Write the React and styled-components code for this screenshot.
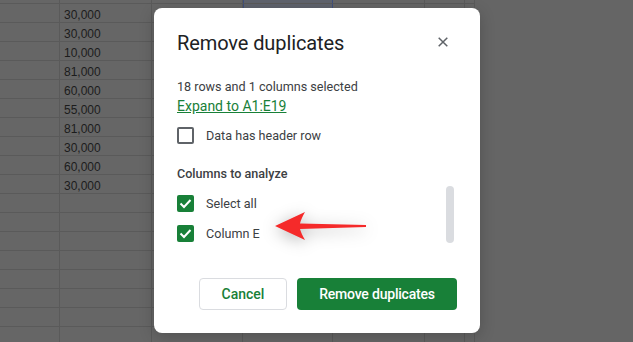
import React from 'react';
import styled, { createGlobalStyle } from 'styled-components';

const GlobalStyle = createGlobalStyle`
    body {
        margin: 0;
        background: #666666;
        overflow: hidden;
        font-family: Roboto, "Liberation Sans", sans-serif;
    }
`;

const Page = styled.div`
    position: relative;
    width: 633px;
    height: 342px;
    overflow: hidden;
    background: #656565;
`;

const Sheet = styled.div`
    display: flex;
    flex-direction: column;
    width: 475px;
    margin-top: -15px;
`;

const Row = styled.div`
    display: flex;
    height: 19px;
`;

const Cell = styled.div`
    box-sizing: border-box;
    flex: 0 0 ${(props) => props.width}px;
    height: 19px;
    border-bottom: 1px solid #5a5a5a;
    border-right: 1px solid #5a5a5a;
    background: ${(props) => (props.selected ? '#5f636d' : '#666666')};
    ${(props) => props.selected && 'border-left: 1px solid #3f4f7c; border-right: 1px solid #3f4f7c;'}
    font-family: "Liberation Sans", Arial, sans-serif;
    font-size: 12px;
    line-height: 18px;
    padding-top: 2px;
    color: #1c1c1c;
    padding-left: 4px;
`;

const Dialog = styled.div`
    position: absolute;
    left: 154px;
    top: 8px;
    width: 326px;
    box-sizing: border-box;
    padding: 23px;
    background: #ffffff;
    border-radius: 8px;
    box-shadow: 0 4px 16px rgba(0, 0, 0, 0.2);
    display: flex;
    flex-direction: column;
`;

const TitleRow = styled.div`
    display: flex;
    align-items: center;
    justify-content: space-between;
    height: 24px;
`;

const Title = styled.div`
    font-size: 20px;
    color: #202124;
    letter-spacing: -0.1px;
`;

const CloseButton = styled.div`
    width: 10px;
    height: 10px;
    margin-right: 9px;
    margin-top: -2px;
    display: flex;
`;

const Info = styled.div`
    margin-top: 23px;
    font-size: 12.6px;
    line-height: 18px;
    color: #3c4043;
`;

const Link = styled.a`
    font-size: 14px;
    line-height: 18px;
    color: #188038;
    text-decoration: underline;
`;

const CheckRow = styled.label`
    display: flex;
    align-items: center;
    height: 24px;
    margin-top: ${(props) => props.top || 0}px;
    font-size: 12.6px;
    color: #3c4043;
`;

const Box = styled.span`
    box-sizing: border-box;
    width: 17px;
    height: 17px;
    border-radius: 2px;
    margin-right: 12px;
    display: flex;
    align-items: center;
    justify-content: center;
    background: ${(props) => (props.checked ? '#188038' : '#ffffff')};
    border: ${(props) => (props.checked ? 'none' : '2px solid #5f6368')};
`;

const SectionTitle = styled.div`
    margin-top: 17px;
    font-size: 12.6px;
    line-height: 20px;
    font-weight: 500;
    color: #3c4043;
`;

const ListArea = styled.div`
    margin-top: 2px;
    display: flex;
    justify-content: space-between;
    align-items: flex-start;
`;

const Items = styled.div`
    padding-top: 5px;
    display: flex;
    flex-direction: column;
    gap: 6px;
`;

const Scrollbar = styled.div`
    width: 8px;
    height: 57px;
    border-radius: 4px;
    background: #dadce0;
    margin-right: 3px;
`;

const Footer = styled.div`
    margin-top: 33px;
    display: flex;
    justify-content: flex-end;
    gap: 10px;
`;

const Button = styled.button`
    box-sizing: border-box;
    height: 32px;
    border-radius: 4px;
    font-family: Roboto, "Liberation Sans", sans-serif;
    font-size: 14px;
    font-weight: 500;
    cursor: pointer;
`;

const OutlineButton = styled(Button)`
    width: 88px;
    background: #ffffff;
    border: 1px solid #dadce0;
    color: #188038;
`;

const GreenButton = styled(Button)`
    width: 160px;
    background: #188038;
    border: none;
    color: #ffffff;
    letter-spacing: -0.2px;
`;

const Arrow = styled.svg`
    position: absolute;
    left: 101px;
    top: 182px;
    filter: drop-shadow(0 3px 8px rgba(0, 0, 0, 0.3));
`;

const values = ['30,000', '30,000', '10,000', '81,000', '60,000', '55,000', '81,000', '30,000', '60,000', '30,000'];
const widths = [60, 92, 91, 90, 92, 40, 10];

const Check = () => (
    <svg width="13" height="11" viewBox="0 0 13 11">
        <polyline points="1.5,5.5 5,9 11.5,2" fill="none" stroke="#ffffff" strokeWidth="2" />
    </svg>
);

const App = () => {
    const rows = [];
    for (let r = 0; r < 19; r++) {
        rows.push(
            <Row key={r}>
                {widths.map((w, c) => (
                    <Cell key={c} width={w} selected={c === 3 && r < 18}>
                        {c === 1 && r >= 1 && r <= values.length ? values[r - 1] : ''}
                    </Cell>
                ))}
            </Row>
        );
    }
    return (
        <>
            <GlobalStyle />
            <Page>
                <Sheet>{rows}</Sheet>
                <Dialog>
                    <TitleRow>
                        <Title>Remove duplicates</Title>
                        <CloseButton>
                            <svg width="10" height="10" viewBox="0 0 10 10">
                                <path d="M0.7 0.7 L9.3 9.3 M9.3 0.7 L0.7 9.3" stroke="#5f6368" strokeWidth="1.5" />
                            </svg>
                        </CloseButton>
                    </TitleRow>
                    <Info>18 rows and 1 columns selected</Info>
                    <div><Link>Expand to A1:E19</Link></div>
                    <CheckRow top={8}>
                        <Box />
                        Data has header row
                    </CheckRow>
                    <SectionTitle>Columns to analyze</SectionTitle>
                    <ListArea>
                        <Items>
                            <CheckRow>
                                <Box checked><Check /></Box>
                                Select all
                            </CheckRow>
                            <CheckRow>
                                <Box checked><Check /></Box>
                                Column E
                            </CheckRow>
                        </Items>
                        <Scrollbar />
                    </ListArea>
                    <Footer>
                        <OutlineButton>Cancel</OutlineButton>
                        <GreenButton>Remove duplicates</GreenButton>
                    </Footer>
                    <Arrow width="125" height="60" viewBox="0 0 125 60">
                        <path
                            d="M20 36 L50 22 Q46 29 45 33.5 L111 35 L111 37 L45 39 Q46 43 50 50 Z"
                            fill="#f52a2a"
                        />
                    </Arrow>
                </Dialog>
            </Page>
        </>
    );
};

export default App;
